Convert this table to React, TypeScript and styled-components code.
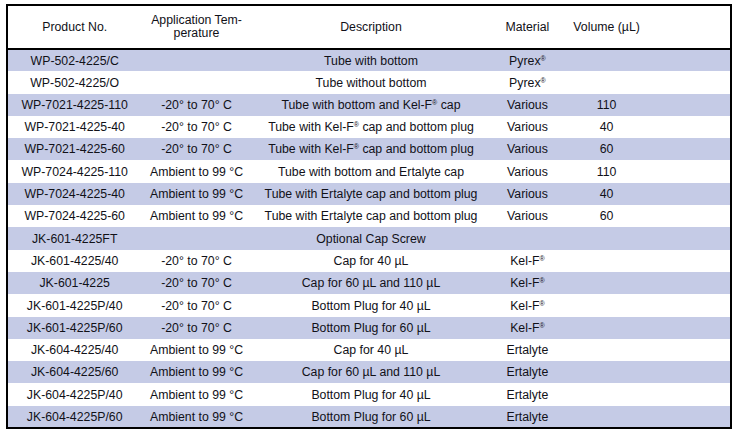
import React from 'react';
import styled, { createGlobalStyle } from 'styled-components';

const GlobalStyle = createGlobalStyle`
  html, body {
    margin: 0;
    padding: 0;
    background: #fff;
  }
`;

const Page = styled.div`
  padding: 4px 8px 0 6px;
  font-family: 'Liberation Sans', Arial, sans-serif;
  font-size: 12.3px;
  color: #111118;
`;

const Table = styled.table`
  width: 726px;
  border-collapse: collapse;
  table-layout: fixed;
  border: 2px solid #000;
`;

const HeadRow = styled.tr`
  height: 44px;
  border-bottom: 2px solid #000;
`;

const HeadCell = styled.th`
  padding: 0;
  font-weight: normal;
  line-height: 13px;
  text-align: center;
  vertical-align: middle;
`;

const Row = styled.tr<{ $shaded: boolean; $tall: boolean }>`
  height: ${(p) => (p.$tall ? 23 : 22)}px;
  background-color: ${(p) => (p.$shaded ? '#c5cbe6' : '#fff')};
`;

const Cell = styled.td`
  padding: 0;
  text-align: center;
  vertical-align: middle;
  white-space: nowrap;
`;

const Reg = styled.sup`
  font-size: 7px;
  line-height: 0;
  vertical-align: 4px;
`;

const R = () => <Reg>®</Reg>;

type Item = {
  no: string;
  temp?: string;
  desc: React.ReactNode;
  material?: React.ReactNode;
  volume?: string;
};

const cold = '-20° to 70° C';
const warm = 'Ambient to 99 °C';

const items: Item[] = [
  { no: 'WP-502-4225/C', desc: 'Tube with bottom', material: <>Pyrex<R /></> },
  { no: 'WP-502-4225/O', desc: 'Tube without bottom', material: <>Pyrex<R /></> },
  { no: 'WP-7021-4225-110', temp: cold, desc: <>Tube with bottom and Kel-F<R /> cap</>, material: 'Various', volume: '110' },
  { no: 'WP-7021-4225-40', temp: cold, desc: <>Tube with Kel-F<R /> cap and bottom plug</>, material: 'Various', volume: '40' },
  { no: 'WP-7021-4225-60', temp: cold, desc: <>Tube with Kel-F<R /> cap and bottom plug</>, material: 'Various', volume: '60' },
  { no: 'WP-7024-4225-110', temp: warm, desc: 'Tube with bottom and Ertalyte cap', material: 'Various', volume: '110' },
  { no: 'WP-7024-4225-40', temp: warm, desc: 'Tube with Ertalyte cap and bottom plug', material: 'Various', volume: '40' },
  { no: 'WP-7024-4225-60', temp: warm, desc: 'Tube with Ertalyte cap and bottom plug', material: 'Various', volume: '60' },
  { no: 'JK-601-4225FT', desc: 'Optional Cap Screw' },
  { no: 'JK-601-4225/40', temp: cold, desc: 'Cap for 40 µL', material: <>Kel-F<R /></> },
  { no: 'JK-601-4225', temp: cold, desc: 'Cap for 60 µL and 110 µL', material: <>Kel-F<R /></> },
  { no: 'JK-601-4225P/40', temp: cold, desc: 'Bottom Plug for 40 µL', material: <>Kel-F<R /></> },
  { no: 'JK-601-4225P/60', temp: cold, desc: 'Bottom Plug for 60 µL', material: <>Kel-F<R /></> },
  { no: 'JK-604-4225/40', temp: warm, desc: 'Cap for 40 µL', material: 'Ertalyte' },
  { no: 'JK-604-4225/60', temp: warm, desc: 'Cap for 60 µL and 110 µL', material: 'Ertalyte' },
  { no: 'JK-604-4225P/40', temp: warm, desc: 'Bottom Plug for 40 µL', material: 'Ertalyte' },
  { no: 'JK-604-4225P/60', temp: warm, desc: 'Bottom Plug for 60 µL', material: 'Ertalyte' },
];

// 17 rows share 379px, so some rows are one pixel taller
const ROW = 379 / items.length;
const isTall = (i: number) => Math.round((i + 1) * ROW) - Math.round(i * ROW) > 22;

export default function App() {
  return (
    <>
      <GlobalStyle />
      <Page>
        <Table>
          <colgroup>
            <col style={{ width: 134 }} />
            <col style={{ width: 110 }} />
            <col style={{ width: 238 }} />
            <col style={{ width: 74 }} />
            <col style={{ width: 84 }} />
            <col style={{ width: 82 }} />
          </colgroup>
          <thead>
            <HeadRow>
              <HeadCell>Product No.</HeadCell>
              <HeadCell>
                Application Tem-
                <br />
                perature
              </HeadCell>
              <HeadCell>Description</HeadCell>
              <HeadCell>Material</HeadCell>
              <HeadCell>Volume (µL)</HeadCell>
              <HeadCell />
            </HeadRow>
          </thead>
          <tbody>
            {items.map((it, i) => (
              <Row key={it.no} $shaded={i % 2 === 0} $tall={isTall(i)}>
                <Cell>{it.no}</Cell>
                <Cell>{it.temp}</Cell>
                <Cell>{it.desc}</Cell>
                <Cell>{it.material}</Cell>
                <Cell>{it.volume}</Cell>
                <Cell />
              </Row>
            ))}
          </tbody>
        </Table>
      </Page>
    </>
  );
}
